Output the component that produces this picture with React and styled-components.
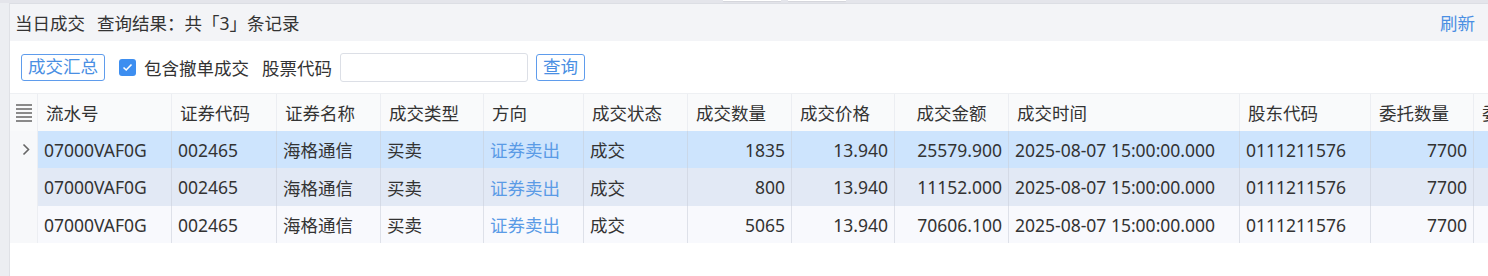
import React from 'react';
import styled, { createGlobalStyle } from 'styled-components';

const GlobalStyle = createGlobalStyle`
  body {
    margin: 0;
    background: #eceef2;
    font-family: "Noto Sans", "Noto Sans CJK SC", sans-serif;
    font-size: 17.5px;
    color: #333;
  }
`;

const Page = styled.div`
  width: 1488px;
  height: 276px;
  overflow: hidden;
`;

const TabStrip = styled.div`
  height: 3px;
  background: #e4e5eb;
  display: flex;
  padding-left: 723px;
  gap: 7px;
`;

const TabStub = styled.div`
  width: 58px;
  height: 1px;
  background: #fff;
  box-shadow: 0 1px 1px rgba(0, 0, 0, 0.08);
`;

const Panel = styled.div`
  margin-left: 9px;
  border-left: 1px solid #dfe1e6;
  border-top: 1px solid #dcdee4;
  background: #fff;
  height: 272px;
`;

const HeaderBar = styled.div`
  height: 37px;
  background: #f3f4f7;
  display: flex;
  align-items: center;
  padding: 0 13px 0 5px;
`;

const Title = styled.span`
  margin-right: 12px;
  color: #333;
`;

const Spacer = styled.div`
  flex: 1;
`;

const LinkText = styled.span`
  color: #4a8fe3;
  cursor: pointer;
`;

const Toolbar = styled.div`
  height: 53px;
  display: flex;
  align-items: center;
  padding-left: 11px;
  border-bottom: 1px solid #eef0f3;
  box-sizing: border-box;
`;

const OutlineButton = styled.button`
  height: 27px;
  padding: 0 6px;
  border: 1px solid #5f9cec;
  border-radius: 3px;
  background: #fff;
  color: #4a8fe3;
  font: inherit;
  line-height: 1;
  margin-right: ${p => p.$gap || 0}px;
`;

const CheckLabel = styled.label`
  display: flex;
  align-items: center;
  gap: 8px;
  margin-right: 13px;
`;

const CheckBox = styled.span`
  width: 17px;
  height: 17px;
  border-radius: 3px;
  background: #3d8ef0;
  display: flex;
  align-items: center;
  justify-content: center;
`;

const FieldLabel = styled.span`
  margin-right: 8px;
`;

const TextInput = styled.input`
  width: 188px;
  height: 29px;
  box-sizing: border-box;
  border: 1px solid #dcdfe6;
  border-radius: 3px;
  margin-right: 8px;
  outline: none;
`;

const TableWrap = styled.div`
  overflow: hidden;
`;

const cols = [28, 134, 105, 104, 103, 100, 104, 104, 103, 114, 231, 131, 103, 110];

const Grid = styled.div`
  display: grid;
  grid-template-columns: ${cols.map(c => c + 'px').join(' ')};
  grid-template-rows: 37px 37px 38px 37px;
  width: max-content;
`;

const rowBg = ['#cde4fd', '#e2e9f5', '#f8f9fd'];

const HeadCell = styled.div`
  background: #f9fafb;
  border-right: 1px solid #eceef2;
  display: flex;
  align-items: center;
  justify-content: ${p => (p.$center ? 'center' : 'flex-start')};
  padding: ${p => (p.$center ? '0' : '0 8px')};
  white-space: nowrap;
  overflow: hidden;
  color: #333;
`;

const IconCell = styled.div`
  background: ${p => (p.$head ? '#f9fafb' : '#f7f8fa')};
  border-right: 1px solid #eceef2;
  display: flex;
  align-items: center;
  justify-content: center;
  padding-left: ${p => (p.$head ? 0 : 4)}px;
`;

const Cell = styled.div`
  background: ${p => rowBg[p.$row]};
  border-right: 1px solid rgba(200, 206, 216, 0.55);
  display: flex;
  align-items: center;
  justify-content: ${p => (p.$right ? 'flex-end' : 'flex-start')};
  padding: 0 6px;
  white-space: nowrap;
  overflow: hidden;
  color: ${p => (p.$link ? '#5a9be6' : '#333')};
`;

const headers = [
  { t: '流水号' },
  { t: '证券代码' },
  { t: '证券名称' },
  { t: '成交类型' },
  { t: '方向' },
  { t: '成交状态' },
  { t: '成交数量' },
  { t: '成交价格' },
  { t: '成交金额', center: true },
  { t: '成交时间' },
  { t: '股东代码' },
  { t: '委托数量' },
  { t: '委托价格' },
];

const rows = [
  ['07000VAF0G', '002465', '海格通信', '买卖', '证券卖出', '成交', '1835', '13.940', '25579.900', '2025-08-07 15:00:00.000', '0111211576', '7700', '13.940'],
  ['07000VAF0G', '002465', '海格通信', '买卖', '证券卖出', '成交', '800', '13.940', '11152.000', '2025-08-07 15:00:00.000', '0111211576', '7700', '13.940'],
  ['07000VAF0G', '002465', '海格通信', '买卖', '证券卖出', '成交', '5065', '13.940', '70606.100', '2025-08-07 15:00:00.000', '0111211576', '7700', '13.940'],
];

const rightCols = [6, 7, 8, 11, 12];

function MenuIcon() {
  return (
    <svg width="16" height="18" viewBox="0 0 16 18">
      {[0, 4, 8, 12, 16].map(y => (
        <rect key={y} x="0" y={y} width="16" height="2" fill="#8a8a8a" />
      ))}
    </svg>
  );
}

function Chevron() {
  return (
    <svg width="8" height="13" viewBox="0 0 8 13">
      <polyline points="1.5,1.5 6.5,6.5 1.5,11.5" fill="none" stroke="#666" strokeWidth="1.6" />
    </svg>
  );
}

export default function App() {
  return (
    <Page>
      <GlobalStyle />
      <TabStrip>
        <TabStub />
        <TabStub />
      </TabStrip>
      <Panel>
        <HeaderBar>
          <Title>当日成交</Title>
          <span>查询结果：共「3」条记录</span>
          <Spacer />
          <LinkText>刷新</LinkText>
        </HeaderBar>
        <Toolbar>
          <OutlineButton $gap={14}>成交汇总</OutlineButton>
          <CheckLabel>
            <CheckBox>
              <svg width="11" height="9" viewBox="0 0 11 9">
                <polyline points="1.5,4.5 4.2,7 9.5,1.5" fill="none" stroke="#fff" strokeWidth="1.6" />
              </svg>
            </CheckBox>
            包含撤单成交
          </CheckLabel>
          <FieldLabel>股票代码</FieldLabel>
          <TextInput />
          <OutlineButton>查询</OutlineButton>
        </Toolbar>
        <TableWrap>
          <Grid>
            <IconCell $head>
              <MenuIcon />
            </IconCell>
            {headers.map(h => (
              <HeadCell key={h.t} $center={h.center}>{h.t}</HeadCell>
            ))}
            {rows.map((r, ri) => (
              <React.Fragment key={ri}>
                <IconCell>{ri === 0 && <Chevron />}</IconCell>
                {r.map((v, ci) => (
                  <Cell key={ci} $row={ri} $right={rightCols.includes(ci)} $link={ci === 4}>
                    {v}
                  </Cell>
                ))}
              </React.Fragment>
            ))}
          </Grid>
        </TableWrap>
      </Panel>
    </Page>
  );
}
